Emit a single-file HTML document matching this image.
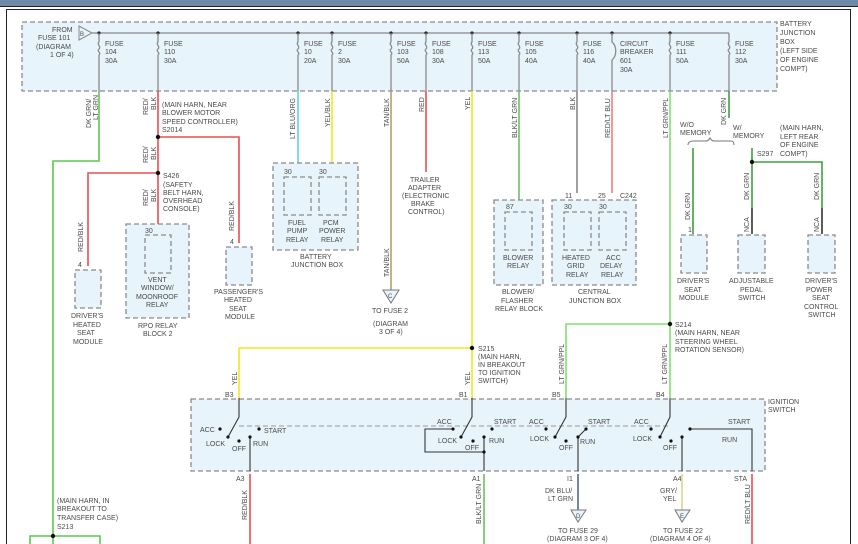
<!DOCTYPE html>
<html><head><meta charset="utf-8"><style>
html,body{margin:0;padding:0;background:#fff;}
svg{display:block;}
text{font-family:"Liberation Sans",sans-serif;font-size:7px;fill:#4a4a4a;}
.b{fill:#e8f4fc;stroke:#8a8a8a;stroke-width:1.3;stroke-dasharray:5,3;}
.w{fill:none;stroke-width:1.6;}
.g{stroke:#8a8a8a;stroke-width:1.3;fill:none;}
</style></head><body>
<svg width="858" height="544" viewBox="0 0 858 544" xmlns="http://www.w3.org/2000/svg">
<rect x="0" y="0" width="858" height="6" fill="#6f8aa8"/>
<rect x="0" y="6" width="858" height="1" fill="#222"/>
<path d="M6.5 544V9.5H850.5V544" fill="none" stroke="#222" stroke-width="1"/>

<rect class="b" x="22" y="22" width="755" height="69"/>
<text x="780" y="26">BATTERY</text><text x="780" y="35">JUNCTION</text><text x="780" y="44">BOX</text><text x="780" y="53">(LEFT SIDE</text><text x="780" y="62">OF ENGINE</text><text x="780" y="71">COMPT)</text>
<text x="52" y="32">FROM</text><text x="38" y="40">FUSE 101</text><text x="36" y="49">(DIAGRAM</text><text x="50" y="57">1 OF 4)</text>
<path d="M79 26L92 33L79 40Z" fill="#e8f4fc" stroke="#888"/><text x="80" y="36" style="font-size:6px">B</text>
<line x1="92" y1="33" x2="729" y2="33" stroke="#888" stroke-width="1.2"/>
<g fill="#222">
<circle cx="99" cy="33" r="1.6"/><circle cx="158" cy="33" r="1.6"/><circle cx="298" cy="33" r="1.6"/><circle cx="332" cy="33" r="1.6"/><circle cx="391" cy="33" r="1.6"/><circle cx="426" cy="33" r="1.6"/><circle cx="472" cy="33" r="1.6"/><circle cx="519" cy="33" r="1.6"/><circle cx="577" cy="33" r="1.6"/><circle cx="612" cy="33" r="1.6"/><circle cx="670" cy="33" r="1.6"/>
</g>
<g class="g">
<path d="M99 33V42c-3 2 3 5 0 7s3 4 0 6V91"/><path d="M158 33V42c-3 2 3 5 0 7s3 4 0 6V91"/><path d="M298 33V42c-3 2 3 5 0 7s3 4 0 6V91"/><path d="M332 33V42c-3 2 3 5 0 7s3 4 0 6V91"/><path d="M391 33V42c-3 2 3 5 0 7s3 4 0 6V91"/><path d="M426 33V42c-3 2 3 5 0 7s3 4 0 6V91"/><path d="M472 33V42c-3 2 3 5 0 7s3 4 0 6V91"/><path d="M519 33V42c-3 2 3 5 0 7s3 4 0 6V91"/><path d="M577 33V42c-3 2 3 5 0 7s3 4 0 6V91"/><path d="M612 33V42c5 4 5 14 0 18V91"/><path d="M670 33V42c-3 2 3 5 0 7s3 4 0 6V91"/><path d="M729 33V42c-3 2 3 5 0 7s3 4 0 6V91"/>
</g>
<g>
<text x="105" y="46">FUSE</text><text x="105" y="54">104</text><text x="105" y="63">30A</text>
<text x="164" y="46">FUSE</text><text x="164" y="54">110</text><text x="164" y="63">30A</text>
<text x="304" y="46">FUSE</text><text x="304" y="54">10</text><text x="304" y="63">20A</text>
<text x="338" y="46">FUSE</text><text x="338" y="54">2</text><text x="338" y="63">30A</text>
<text x="397" y="46">FUSE</text><text x="397" y="54">103</text><text x="397" y="63">50A</text>
<text x="432" y="46">FUSE</text><text x="432" y="54">108</text><text x="432" y="63">30A</text>
<text x="478" y="46">FUSE</text><text x="478" y="54">113</text><text x="478" y="63">50A</text>
<text x="525" y="46">FUSE</text><text x="525" y="54">105</text><text x="525" y="63">40A</text>
<text x="583" y="46">FUSE</text><text x="583" y="54">116</text><text x="583" y="63">40A</text>
<text x="620" y="46">CIRCUIT</text><text x="620" y="54">BREAKER</text><text x="620" y="63">601</text><text x="620" y="72">30A</text>
<text x="676" y="46">FUSE</text><text x="676" y="54">111</text><text x="676" y="63">50A</text>
<text x="735" y="46">FUSE</text><text x="735" y="54">112</text><text x="735" y="63">30A</text>
</g>

<path class="w" stroke="#5cc850" d="M99 91V161H53V544"/>
<path class="w" stroke="#e85050" d="M158 91V230M158 137H239V243M158 173H88V266"/>
<path class="w" stroke="#5ad8e0" d="M298 91V170"/>
<path class="w" stroke="#f0e820" d="M332 91V170"/>
<path class="w" stroke="#b0a070" d="M391 91V290"/>
<path class="w" stroke="#e85050" d="M426 91V172"/>
<path class="w" stroke="#f0e820" d="M472 91V398M472 348H239V398"/>
<path class="w" stroke="#6cc060" d="M519 91V205"/>
<path class="w" stroke="#888" d="M577 91V193"/>
<path class="w" stroke="#e88080" d="M612 91V193"/>
<path class="w" stroke="#80e070" d="M670 91V398M670 324H566V398"/>
<path class="w" stroke="#40a040" d="M729 91V118M693 148V234M752 148V162H822V208M752 162V208"/>
<path class="w" stroke="#333" d="M752 208V234M822 208V234"/>
<g fill="#111"><circle cx="158" cy="137" r="2.2"/><circle cx="158" cy="173" r="2.2"/><circle cx="472" cy="348" r="2.2"/><circle cx="670" cy="324" r="2.2"/><circle cx="752" cy="162" r="2.2"/></g>

<g>
<text transform="translate(91,128) rotate(-90)">DK GRN/</text><text transform="translate(98,120) rotate(-90)">LT GRN</text>
<text transform="translate(148,115) rotate(-90)">RED/</text><text transform="translate(156,110) rotate(-90)">BLK</text>
<text transform="translate(148,163) rotate(-90)">RED/</text><text transform="translate(156,160) rotate(-90)">BLK</text>
<text transform="translate(148,206) rotate(-90)">RED/</text><text transform="translate(156,202) rotate(-90)">BLK</text>
<text transform="translate(83,252) rotate(-90)">RED/BLK</text>
<text transform="translate(234,231) rotate(-90)">RED/BLK</text>
<text transform="translate(295,139) rotate(-90)">LT BLU/ORG</text>
<text transform="translate(330,127) rotate(-90)">YEL/BLK</text>
<text transform="translate(389,127) rotate(-90)">TAN/BLK</text>
<text transform="translate(389,277) rotate(-90)">TAN/BLK</text>
<text transform="translate(424,112) rotate(-90)">RED</text>
<text transform="translate(470,110) rotate(-90)">YEL</text>
<text transform="translate(517,138) rotate(-90)">BLK/LT GRN</text>
<text transform="translate(575,110) rotate(-90)">BLK</text>
<text transform="translate(610,138) rotate(-90)">RED/LT BLU</text>
<text transform="translate(668,138) rotate(-90)">LT GRN/PPL</text>
<text transform="translate(726,125) rotate(-90)">DK GRN</text>
<text transform="translate(690,220) rotate(-90)">DK GRN</text>
<text transform="translate(749,200) rotate(-90)">DK GRN</text>
<text transform="translate(819,200) rotate(-90)">DK GRN</text>
<text transform="translate(749,232) rotate(-90)">NCA</text>
<text transform="translate(819,232) rotate(-90)">NCA</text>
<text transform="translate(237,385) rotate(-90)">YEL</text>
<text transform="translate(470,385) rotate(-90)">YEL</text>
<text transform="translate(564,384) rotate(-90)">LT GRN/PPL</text>
<text transform="translate(667,384) rotate(-90)">LT GRN/PPL</text>
<text transform="translate(247,520) rotate(-90)">RED/BLK</text>
<text transform="translate(481,524) rotate(-90)">BLK/LT GRN</text>
<text transform="translate(750,524) rotate(-90)">RED/LT BLU</text>
</g>

<text x="162" y="107">(MAIN HARN, NEAR</text><text x="162" y="115">BLOWER MOTOR</text><text x="162" y="124">SPEED CONTROLLER)</text><text x="162" y="132">S2014</text>
<text x="163" y="178">S426</text><text x="163" y="187">(SAFETY</text><text x="163" y="195">BELT HARN,</text><text x="163" y="203">OVERHEAD</text><text x="163" y="211">CONSOLE)</text>
<text x="410" y="182">TRAILER</text><text x="408" y="190">ADAPTER</text><text x="402" y="198">(ELECTRONIC</text><text x="411" y="206">BRAKE</text><text x="408" y="214">CONTROL)</text>
<text x="372" y="313">TO FUSE 2</text><text x="373" y="326">(DIAGRAM</text><text x="379" y="334">3 OF 4)</text>
<text x="478" y="351">S215</text><text x="478" y="359">(MAIN HARN,</text><text x="478" y="367">IN BREAKOUT</text><text x="478" y="375">TO IGNITION</text><text x="478" y="383">SWITCH)</text>
<text x="675" y="327">S214</text><text x="675" y="335">(MAIN HARN, NEAR</text><text x="675" y="344">STEERING WHEEL</text><text x="675" y="352">ROTATION SENSOR)</text>
<text x="680" y="127">W/O</text><text x="680" y="135">MEMORY</text><text x="733" y="130">W/</text><text x="733" y="138">MEMORY</text>
<path d="M688 145c0-4 4-4 6-4h12c2 0 3-1 4-3c1 2 2 3 4 3h16c2 0 4 0 4 4" fill="none" stroke="#777"/>
<text x="780" y="130">(MAIN HARN,</text><text x="780" y="139">LEFT REAR</text><text x="780" y="147">OF ENGINE</text><text x="780" y="156">COMPT)</text><text x="757" y="156">S297</text>

<rect class="b" x="75" y="270" width="26" height="38"/><text x="78" y="267">4</text>
<text x="71" y="318">DRIVER'S</text><text x="73" y="327">HEATED</text><text x="77" y="335">SEAT</text><text x="73" y="344">MODULE</text>
<rect class="b" x="126" y="224" width="63" height="94"/><rect class="b" x="145" y="235" width="26" height="38"/><text x="145" y="233">30</text>
<text x="148" y="282">VENT</text><text x="141" y="290">WINDOW/</text><text x="136" y="299">MOONROOF</text><text x="146" y="307">RELAY</text>
<text x="138" y="328">RPO RELAY</text><text x="143" y="336">BLOCK 2</text>
<rect class="b" x="226" y="247" width="26" height="38"/><text x="230" y="244">4</text>
<text x="214" y="294">PASSENGER'S</text><text x="224" y="302">HEATED</text><text x="229" y="311">SEAT</text><text x="225" y="319">MODULE</text>
<rect class="b" x="273" y="163" width="85" height="87"/><rect class="b" x="284" y="177" width="27" height="38"/><rect class="b" x="319" y="177" width="27" height="38"/>
<text x="284" y="174">30</text><text x="319" y="174">30</text>
<text x="288" y="225">FUEL</text><text x="287" y="233">PUMP</text><text x="286" y="242">RELAY</text><text x="323" y="225">PCM</text><text x="319" y="233">POWER</text><text x="321" y="242">RELAY</text>
<text x="300" y="259">BATTERY</text><text x="291" y="267">JUNCTION BOX</text>
<path d="M383 290H399L391 303Z" fill="#e8f4fc" stroke="#777"/><text x="388" y="298" style="font-size:6px">C</text>

<rect class="b" x="494" y="200" width="49" height="85"/><rect class="b" x="505" y="212" width="27" height="38"/><text x="506" y="209">87</text>
<text x="503" y="260">BLOWER</text><text x="507" y="268">RELAY</text>
<text x="502" y="294">BLOWER/</text><text x="501" y="303">FLASHER</text><text x="495" y="311">RELAY BLOCK</text>
<rect class="b" x="552" y="200" width="84" height="85"/><rect class="b" x="564" y="212" width="27" height="38"/><rect class="b" x="599" y="212" width="27" height="38"/>
<text x="565" y="198">11</text><text x="598" y="198">25</text><text x="620" y="198">C242</text><text x="564" y="209">30</text><text x="599" y="209">30</text>
<text x="562" y="260">HEATED</text><text x="567" y="268">GRID</text><text x="566" y="277">RELAY</text><text x="606" y="260">ACC</text><text x="600" y="268">DELAY</text><text x="601" y="277">RELAY</text>
<text x="578" y="294">CENTRAL</text><text x="569" y="303">JUNCTION BOX</text>
<rect class="b" x="681" y="235" width="26" height="38"/><text x="688" y="232">1</text>
<text x="677" y="283">DRIVER'S</text><text x="684" y="292">SEAT</text><text x="679" y="300">MODULE</text>
<rect class="b" x="738" y="235" width="27" height="38"/>
<text x="729" y="283">ADJUSTABLE</text><text x="740" y="292">PEDAL</text><text x="738" y="300">SWITCH</text>
<rect class="b" x="808" y="235" width="27" height="38"/>
<text x="805" y="283">DRIVER'S</text><text x="806" y="292">POWER</text><text x="812" y="300">SEAT</text><text x="804" y="309">CONTROL</text><text x="808" y="317">SWITCH</text>

<!-- ignition switch -->
<rect class="b" x="191" y="399" width="574" height="72"/>
<text x="768" y="404">IGNITION</text><text x="768" y="412">SWITCH</text>
<line x1="239" y1="426" x2="670" y2="426" stroke="#999" stroke-dasharray="5,3"/>
<text x="225" y="397">B3</text><text x="459" y="397">B1</text><text x="552" y="397">B5</text><text x="656" y="397">B4</text>
<g stroke="#333" fill="none" stroke-width="1.1">
<path d="M239 398V417L228 437"/><path d="M472 398V417L461 437"/><path d="M566 398V417L555 437"/><path d="M670 398V417L660 437"/>
<path d="M250 437V471"/><path d="M484 437V471"/><path d="M578 437V471"/><path d="M682 437V471"/><path d="M690 429H752V471"/>
<path d="M453 429H425V452H484"/><path d="M578 437L586 429"/>
</g>
<g fill="#111">
<circle cx="220" cy="429" r="1.6"/><circle cx="228" cy="437" r="1.6"/><circle cx="239" cy="441" r="1.6"/><circle cx="250" cy="437" r="1.6"/><circle cx="259" cy="429" r="1.6"/>
<circle cx="453" cy="429" r="1.6"/><circle cx="461" cy="437" r="1.6"/><circle cx="473" cy="441" r="1.6"/><circle cx="484" cy="437" r="1.6"/><circle cx="492" cy="429" r="1.6"/><circle cx="484" cy="452" r="1.6"/>
<circle cx="546" cy="429" r="1.6"/><circle cx="555" cy="437" r="1.6"/><circle cx="566" cy="441" r="1.6"/><circle cx="578" cy="437" r="1.6"/><circle cx="586" cy="429" r="1.6"/>
<circle cx="651" cy="429" r="1.6"/><circle cx="660" cy="437" r="1.6"/><circle cx="671" cy="441" r="1.6"/><circle cx="682" cy="437" r="1.6"/><circle cx="690" cy="429" r="1.6"/>
</g>
<text x="200" y="432">ACC</text><text x="264" y="433">START</text><text x="206" y="446">LOCK</text><text x="232" y="451">OFF</text><text x="253" y="446">RUN</text>
<text x="437" y="424">ACC</text><text x="494" y="424">START</text><text x="438" y="443">LOCK</text><text x="465" y="450">OFF</text><text x="489" y="443">RUN</text>
<text x="529" y="424">ACC</text><text x="588" y="424">START</text><text x="530" y="441">LOCK</text><text x="559" y="450">OFF</text><text x="580" y="444">RUN</text>
<text x="634" y="424">ACC</text><text x="633" y="441">LOCK</text><text x="663" y="450">OFF</text><text x="728" y="424">START</text><text x="722" y="442">RUN</text>

<text x="236" y="481">A3</text><text x="472" y="481">A1</text><text x="567" y="481">I1</text><text x="673" y="481">A4</text><text x="734" y="481">STA</text>
<path class="w" stroke="#e85050" d="M250 474V544"/><path class="w" stroke="#6cc060" d="M484 474V544"/><path class="w" stroke="#4a6a90" d="M578 474V510"/><path class="w" stroke="#d8d890" d="M682 474V510"/><path class="w" stroke="#e85050" d="M752 474V544"/>
<text x="545" y="493">DK BLU/</text><text x="548" y="501">LT GRN</text><text x="660" y="493">GRY/</text><text x="663" y="501">YEL</text>
<path d="M571 510H586L578 522Z" fill="#e8f4fc" stroke="#777"/><text x="576" y="518" style="font-size:6px">D</text>
<path d="M675 510H690L682 522Z" fill="#e8f4fc" stroke="#777"/><text x="680" y="518" style="font-size:6px">E</text>
<text x="558" y="533">TO FUSE 29</text><text x="547" y="541">(DIAGRAM 3 OF 4)</text>
<text x="663" y="533">TO FUSE 22</text><text x="650" y="541">(DIAGRAM 4 OF 4)</text>
<text x="57" y="503">(MAIN HARN, IN</text><text x="57" y="511">BREAKOUT TO</text><text x="57" y="520">TRANSFER CASE)</text><text x="57" y="529">S213</text>
<path class="w" stroke="#5cc850" d="M30 544V536H100V544"/><circle cx="53" cy="536" r="2.2" fill="#111"/>
</svg>
</body></html>
